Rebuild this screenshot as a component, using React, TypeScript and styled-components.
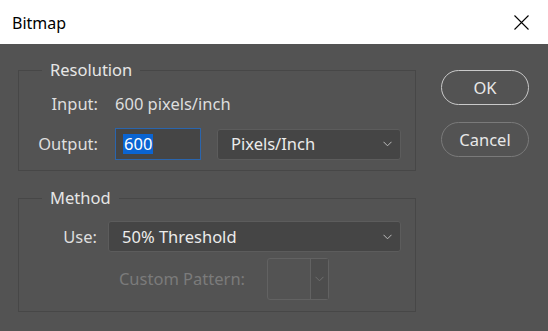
import React from "react";
import styled, { createGlobalStyle } from "styled-components";

const GlobalStyle = createGlobalStyle`
  html, body {
    margin: 0;
    padding: 0;
    background: #ffffff;
  }
  body {
    font-family: "Noto Sans", "Open Sans", sans-serif;
  }
`;

export default function App() {
  return (
    <>
      <GlobalStyle />
      <Window>
        <TitleBar>
          <Title>Bitmap</Title>
          <CloseButton aria-label="Close">
            <svg width="15" height="15" viewBox="0 0 15 15">
              <path d="M0.5 0.5 L14.5 14.5 M14.5 0.5 L0.5 14.5" stroke="#000" strokeWidth="1.1" />
            </svg>
          </CloseButton>
        </TitleBar>
        <Body>
          <Groups>
            <GroupBox $height={101}>
              <Legend>Resolution</Legend>
              <Row $labelWidth={79} $gap={17} $top={15}>
                <Label>Input:</Label>
                <Value>600 pixels/inch</Value>
              </Row>
              <Row $labelWidth={79} $gap={17} $top={14}>
                <Label>Output:</Label>
                <TextField>
                  <Selected>600</Selected>
                </TextField>
                <Select $width={184} $offset={-1}>
                  <span>Pixels/Inch</span>
                  <Chevron />
                </Select>
              </Row>
            </GroupBox>
            <GroupBox $height={114}>
              <Legend>Method</Legend>
              <Row $labelWidth={78} $gap={11} $top={14}>
                <Label>Use:</Label>
                <Select $width={293}>
                  <span>50% Threshold</span>
                  <Chevron />
                </Select>
              </Row>
              <Row $labelWidth={226} $gap={22} $top={6}>
                <Label $disabled>Custom Pattern:</Label>
                <PatternPicker>
                  <Swatch />
                  <PatternArrow>
                    <Chevron $dim />
                  </PatternArrow>
                </PatternPicker>
              </Row>
            </GroupBox>
          </Groups>
          <Buttons>
            <PillButton $primary>OK</PillButton>
            <PillButton>Cancel</PillButton>
          </Buttons>
        </Body>
      </Window>
    </>
  );
}

function Chevron({ $dim }: { $dim?: boolean }) {
  return (
    <svg width="9" height="6" viewBox="0 0 9 6">
      <path
        d="M0.5 0.8 L4.5 4.8 L8.5 0.8"
        fill="none"
        stroke={$dim ? "#6e6e6e" : "#bdbdbd"}
        strokeWidth="1"
      />
    </svg>
  );
}

const Window = styled.div`
  width: 548px;
  height: 331px;
  display: flex;
  flex-direction: column;
  background: #535353;
  overflow: hidden;
`;

const TitleBar = styled.div`
  height: 44px;
  flex: none;
  background: #ffffff;
  display: flex;
  align-items: center;
  justify-content: space-between;
  padding: 0 19px 0 12px;
`;

const Title = styled.div`
  font-size: 16px;
  color: #000;
  margin-top: 2px;
`;

const CloseButton = styled.div`
  display: flex;
  align-items: center;
  margin-top: 1px;
`;

const Body = styled.div`
  flex: 1;
  display: flex;
  padding: 26px 19px 0 18px;
  gap: 25px;
`;

const Groups = styled.div`
  display: flex;
  flex-direction: column;
  gap: 27px;
  width: 398px;
`;

const GroupBox = styled.div<{ $height: number }>`
  position: relative;
  height: ${(p) => p.$height}px;
  box-sizing: border-box;
  border: 1px solid #474747;
  padding-top: 8px;
`;

const Legend = styled.div`
  position: absolute;
  top: -11px;
  left: 23px;
  padding: 0 8px;
  background: #535353;
  color: #e6e6e6;
  font-size: 16.5px;
  line-height: 20px;
`;

const Row = styled.div<{ $labelWidth: number; $gap: number; $top: number }>`
  display: flex;
  align-items: center;
  gap: ${(p) => p.$gap}px;
  margin-top: ${(p) => p.$top}px;
  line-height: 20px;

  & > :first-child {
    width: ${(p) => p.$labelWidth}px;
    flex: none;
  }
`;

const Label = styled.div<{ $disabled?: boolean }>`
  text-align: right;
  font-size: 16.5px;
  white-space: nowrap;
  color: ${(p) => (p.$disabled ? "#7b7b7b" : "#dedede")};
`;

const Value = styled.div`
  font-size: 16.5px;
  color: #dedede;
`;

const TextField = styled.div`
  width: 86px;
  height: 32px;
  flex: none;
  box-sizing: border-box;
  border: 1px solid #2a65ad;
  background: #454545;
  display: flex;
  align-items: center;
  padding-left: 7px;
`;

const Selected = styled.span`
  background: #0a64d2;
  color: #ffffff;
  font-size: 16.5px;
  line-height: 20px;
  padding: 0 1px;
`;

const Select = styled.div<{ $width: number; $offset?: number }>`
  width: ${(p) => p.$width}px;
  height: 31px;
  flex: none;
  margin-left: ${(p) => p.$offset ?? 0}px;
  box-sizing: border-box;
  border: 1px solid #5c5c5c;
  border-radius: 3px;
  background: #454545;
  display: flex;
  align-items: center;
  justify-content: space-between;
  padding: 0 8px 0 13px;
  color: #ececec;
  font-size: 16.5px;
`;

const PatternPicker = styled.div`
  width: 62px;
  height: 42px;
  flex: none;
  box-sizing: border-box;
  border: 1px solid #626262;
  border-radius: 3px;
  display: flex;
`;

const Swatch = styled.div`
  flex: 1;
`;

const PatternArrow = styled.div`
  width: 17px;
  border-left: 1px solid #626262;
  background: #4d4d4d;
  display: flex;
  align-items: center;
  justify-content: center;
`;

const Buttons = styled.div`
  display: flex;
  flex-direction: column;
  gap: 17px;
`;

const PillButton = styled.div<{ $primary?: boolean }>`
  width: 88px;
  height: 35px;
  box-sizing: border-box;
  border-radius: 18px;
  border: ${(p) => (p.$primary ? "1.5px solid #c9c9c9" : "1px solid #7a7a7a")};
  display: flex;
  align-items: center;
  justify-content: center;
  color: #e8e8e8;
  font-size: 16.5px;
`;
